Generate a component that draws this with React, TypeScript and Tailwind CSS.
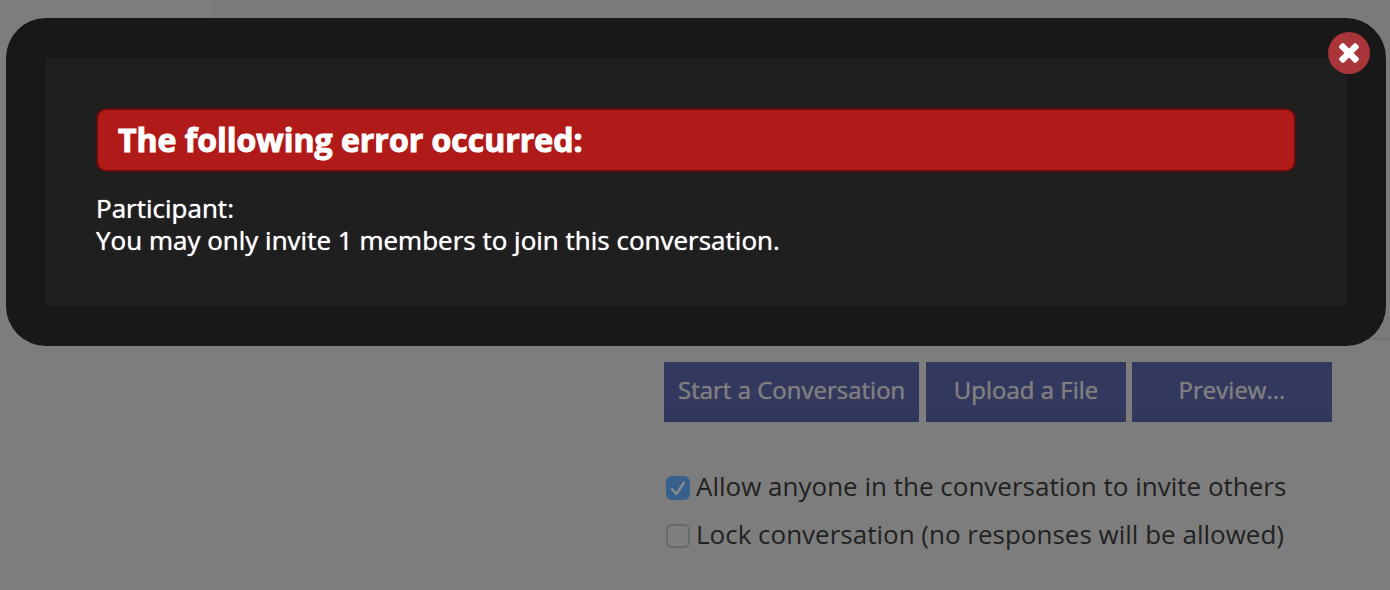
import React, { useState } from 'react';

interface OptionProps {
  id: string;
  label: string;
  checked: boolean;
  onChange: (checked: boolean) => void;
}

const Option: React.FC<OptionProps> = ({ id, label, checked, onChange }) => {
  return (
    <div className="flex items-center gap-1.5 h-12">
      <span className="relative flex shrink-0 mt-1">
        <input
          id={id}
          type="checkbox"
          checked={checked}
          onChange={(e) => onChange(e.target.checked)}
          className="appearance-none w-6 h-6 rounded-md border-2 border-[#696969] bg-[#7e7e7e] checked:border-0 checked:bg-[#37618d]"
        />
        {checked && (
          <svg viewBox="0 0 24 24" className="absolute inset-0 w-6 h-6 pointer-events-none" fill="none" stroke="#8c8c8c" strokeWidth="2.4" strokeLinecap="round" strokeLinejoin="round">
            <path d="M6 13.2l4.4 4.8L18 6.5" />
          </svg>
        )}
      </span>
      <label htmlFor={id} className="text-[26px] leading-8 text-[#222222] whitespace-nowrap">
        {label}
      </label>
    </div>
  );
};

const ActionButton: React.FC<{ label: string }> = ({ label }) => {
  return (
    <button
      type="button"
      className="h-[60px] min-w-[200px] px-3 pb-1 border-x-2 border-[#33385e] bg-[#33385e] shadow-[inset_0_-8px_0_#30355a] text-2xl text-[#7f7f7f] text-shadow-[0_0_1px_#7f7f7f] whitespace-nowrap"
    >
      {label}
    </button>
  );
};

interface ErrorDialogProps {
  onClose: () => void;
}

const ErrorDialog: React.FC<ErrorDialogProps> = ({ onClose }) => {
  return (
    <div
      role="alertdialog"
      aria-labelledby="error-title"
      className="absolute top-[18px] left-1.5 right-1 p-10 rounded-[40px] bg-[#181818]"
    >
      <div className="bg-[#1f1f1f] p-[50px] text-white">
        <h2
          id="error-title"
          className="h-16 px-5 flex items-center rounded-[10px] border-2 border-[#620d0d] bg-[#b01b1a] text-[32px] font-bold [-webkit-text-stroke:1px_#ffffff]"
        >
          The following error occurred:
        </h2>
        <div className="mt-5 text-[26px] leading-8 text-shadow-[0_0_1px_#ffffff]">
          <p>Participant:</p>
          <p>You may only invite 1 members to join this conversation.</p>
        </div>
      </div>

      {/* Close */}
      <button
        type="button"
        aria-label="Close"
        onClick={onClose}
        className="absolute top-3.5 right-4 w-[42px] h-[42px] rounded-full bg-[#a9343a] flex items-center justify-center"
      >
        <svg viewBox="110 366 1188 1188" className="w-5 h-5" fill="#ffffff">
          <path d="M1298 1322q0 40-28 68l-136 136q-28 28-68 28t-68-28l-294-294-294 294q-28 28-68 28t-68-28l-136-136q-28-28-28-68t28-68l294-294-294-294q-28-28-28-68t28-68l136-136q28-28 68-28t68 28l294 294 294-294q28-28 68-28t68 28l136 136q28 28 28 68t-28 68l-294 294 294 294q28 28 28 68z" />
        </svg>
      </button>
    </div>
  );
};

export default function App() {
  const [open, setOpen] = useState(true);
  const [allowInvites, setAllowInvites] = useState(true);
  const [locked, setLocked] = useState(false);

  return (
    <div className="relative min-h-screen bg-[#7d7d7d] font-['Open_Sans','Noto_Sans',sans-serif]">
      {/* Editor area */}
      <div className="h-[340px] flex">
        <div className="w-[212px] shrink-0" />
        <div className="flex-1 border-l-2 border-b-2 border-l-[#787878] border-b-[#747474] bg-[#7b7b7b]" />
      </div>

      <div className="flex flex-col items-end pt-[22px] pr-[58px]">
        <div className="w-[668px]">
          <div className="flex justify-between">
            <ActionButton label="Start a Conversation" />
            <div className="flex gap-1.5">
              <ActionButton label="Upload a File" />
              <ActionButton label="Preview..." />
            </div>
          </div>

          {/* Conversation options */}
          <div className="mt-10 pl-0.5">
            <Option
              id="allow-invites"
              label="Allow anyone in the conversation to invite others"
              checked={allowInvites}
              onChange={setAllowInvites}
            />
            <Option
              id="lock-conversation"
              label="Lock conversation (no responses will be allowed)"
              checked={locked}
              onChange={setLocked}
            />
          </div>
        </div>
      </div>

      {open && <ErrorDialog onClose={() => setOpen(false)} />}
    </div>
  );
}
